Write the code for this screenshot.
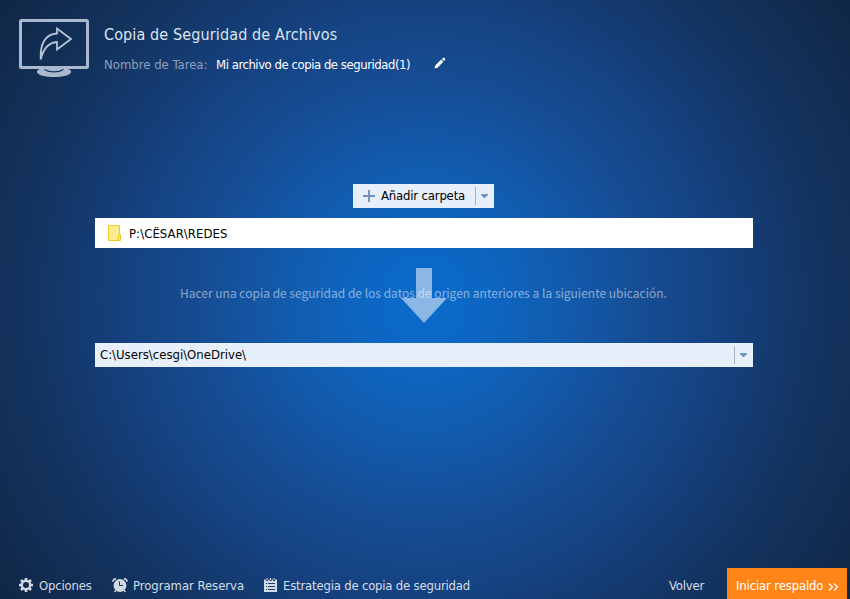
<main class="window">
  <header>
    <svg class="monitor" width="72" height="60" viewBox="0 0 72 60">
      <rect x="2.5" y="2.5" width="67" height="47" rx="1" fill="none" stroke="#abb9cf" stroke-width="3" />
      <path d="M22 51h28c7 2.5 2 8-14 8S15 53.500 22 51Z" fill="#abb9cf" />
      <path d="M26.500 51.500c5 3.200 14 3.200 19 0" fill="none" stroke="#153867" stroke-width="1.3" />
      <path d="M22.700 41.500C22 27 26.500 16 39 15.500V10.500L53 21L39 31.500V24C31 24.500 25.500 30 22.700 41.500Z" fill="none" stroke="#b9c5d6" stroke-width="1.8" />
    </svg>
    <div class="heading">
      <h1>Copia de Seguridad de Archivos</h1>
      <div class="task">
        <span class="label">Nombre de Tarea:</span>
        <span class="name">Mi archivo de copia de seguridad(1)</span>
        <svg class="edit" width="12" height="12" viewBox="0 0 12 12" fill="#fff">
          <path d="M0.5 11.5L1.2 8.5L7.2 2.6L9.3 4.7L3.6 10.7ZM8 1.9L9.2 0.8H10.2L11.2 2V2.8L10 4Z" />
        </svg>
      </div>
    </div>
  </header>

  <section>
    <button class="add">
      <svg width="12" height="12" viewBox="0 0 12 12"><path d="M6 0V12M0 6H12" stroke="#7196c0" stroke-width="2" /></svg>
      <span class="add-text">Añadir carpeta</span>
      <i class="divider"></i>
      <svg class="caret" width="7" height="4" viewBox="0 0 7 4"><path d="M0 0H7V1L4 4H3L0 1Z" fill="#6f95c0" /></svg>
    </button>
    <div class="source">
      <svg width="13" height="16" viewBox="0 0 13 16">
        <path d="M.5.5h11v15H.5Z" fill="#ffe98f" stroke="#eeca25" />
        <path d="M10.5 9.5h2v6h-2Z" fill="#ffe98f" stroke="#eeca25" />
      </svg>
      <span class="path">P:\CËSAR\REDES</span>
    </div>
    <div class="hint">
      <svg class="arrow" width="46" height="55" viewBox="0 0 46 55"><path d="M15 0H31V30H46L23 55L0 30H15Z" fill="#8bb7e6" /></svg>
      <p>Hacer una copia de seguridad de los datos de origen anteriores a la siguiente ubicación.</p>
    </div>
    <div class="target">
      <span class="dest">C:\Users\cesgi\OneDrive\</span>
      <i class="divider"></i>
      <svg class="caret" width="7" height="4" viewBox="0 0 7 4"><path d="M0 0H7V1L4 4H3L0 1Z" fill="#6f95c0" /></svg>
    </div>
  </section>

  <footer>
    <div class="action options">
      <svg width="14" height="14" viewBox="0 0 14 14">
        <circle cx="7" cy="7" r="4.2" fill="none" stroke="#d2d9e2" stroke-width="2.4" />
        <path d="M7 0V2.5M7 11.5V14M0 7H2.5M11.5 7H14M2 2L3.8 3.8M10.2 10.2L12 12M12 2L10.2 3.8M3.8 10.2L2 12" stroke="#d2d9e2" stroke-width="2.6" />
      </svg>
      <span>Opciones</span>
    </div>
    <div class="action schedule">
      <svg width="16" height="15" viewBox="0 0 16 15">
        <circle cx="8" cy="7.5" r="6.4" fill="#d2d9e2" />
        <path d="M.8 3.8Q1 1 4.2 .8M15.2 3.8Q15 1 11.8 .8M4 12.3L2.6 14M12 12.3L13.4 14" stroke="#d2d9e2" stroke-width="1.5" fill="none" />
        <path d="M7.5 3.5V7.5H11" fill="none" stroke="#153564" />
      </svg>
      <span>Programar Reserva</span>
    </div>
    <div class="action strategy">
      <svg width="13" height="14" viewBox="0 0 13 14">
        <path d="M0 1.5H2V3H4V1.5H5.5V3H7.5V1.5H9V3H11V1.5H13V14H0Z" fill="#d2d9e2" />
        <path d="M3 0V2M6.5 0V2M10 0V2" stroke="#d2d9e2" />
        <path d="M2 5.5H3M4 5.5H11M2 8.5H3M4 8.5H11M2 11.5H3M4 11.5H11" stroke="#15417b" />
      </svg>
      <span>Estrategia de copia de seguridad</span>
    </div>
    <span class="back">Volver</span>
    <button class="start"><span>Iniciar respaldo</span>
      <svg width="11" height="8" viewBox="0 0 11 8"><path d="M1 .5L4.500 4L1 7.500M6 .5L9.500 4L6 7.500" fill="none" stroke="#fff" stroke-width="1.2" /></svg>
    </button>
  </footer>
</main>

<style>
  :global(body) { margin: 0; }
  .window {
    width: 850px;
    height: 599px;
    overflow: hidden;
    display: flex;
    flex-direction: column;
    box-sizing: border-box;
    font: 13px/16px "DejaVu Sans Condensed", "DejaVu Sans", sans-serif;
    font-stretch: condensed;
    color: #d5dde8;
    background: radial-gradient(circle at 424px 300px, #096ccd 0, #0d65c0 70px, #125bad 140px, #164b91 230px, #15417f 300px, #13335f 400px, #102746 520px);
  }
  span, h1, p { white-space: nowrap; }
  svg { display: block; flex: none; }
  header { display: flex; padding: 18px 0 0 18px; height: 166px; box-sizing: border-box; }
  .heading { margin-left: 14px; }
  h1 { margin: 6px 0 0; font-size: 16px; line-height: 22px; font-weight: 400; letter-spacing: .12px; color: #dce4f0; }
  .task { display: flex; align-items: center; margin-top: 11px; height: 16px; }
  .label { width: 112px; color: #8d9fbb; }
  .name { width: 218px; color: #fff; letter-spacing: -.46px; }
  .edit { margin-top: -4px; }
  section { display: flex; flex-direction: column; align-items: center; width: 658px; margin: 18px 0 0 95px; }
  button { border: 0; padding: 0; font: inherit; display: flex; align-items: center; }
  .add { width: 141px; height: 24px; margin-right: 1px; background: #e7effa; color: #000; padding-left: 10px; box-sizing: border-box; }
  .add-text { width: 94px; margin-left: 6px; text-align: left; letter-spacing: -.18px; }
  .divider { width: 1px; height: 18px; background: #a9b4c2; }
  .caret { margin-left: 5px; }
  .source { width: 645px; height: 30px; margin-top: 10px; padding-left: 13px; display: flex; align-items: center; background: #fff; color: #000; }
  .path { margin-left: 8px; padding-top: 2px; letter-spacing: .07px; }
  .hint { width: 658px; height: 95px; display: grid; }
  .arrow { grid-area: 1 / 1; margin: 20px 0 0 306px; }
  .hint p { grid-area: 1 / 1; margin: 35px 0 0 85px; font: 12px/19px "Noto Sans CJK SC", sans-serif; color: rgba(255, 255, 255, .5); z-index: 1; }
  .target { width: 658px; height: 24px; display: flex; align-items: center; color: #000; background: #e7effa; }
  .dest { flex: 1; padding-left: 5px; }
  .target .caret { margin-right: 6px; }
  footer { margin-top: auto; height: 31px; display: flex; align-items: flex-start; padding-left: 19px; }
  .action { display: flex; align-items: center; gap: 6px; height: 16px; margin-top: 9px; letter-spacing: -.2px; }
  .action span { padding-top: 2px; }
  .options { width: 93px; }
  .schedule { width: 152px; gap: 5px; letter-spacing: -.05px; }
  .strategy { width: 405px; }
  .back { margin-top: 10px; width: 58px; letter-spacing: -.2px; }
  .start { width: 120px; height: 31px; padding: 5px 0 0 9px; box-sizing: border-box; background: #ff8519; color: #fff; }
  .start span { width: 92px; text-align: left; letter-spacing: -.15px; }
  .start svg { margin-top: 1px; }
</style>
